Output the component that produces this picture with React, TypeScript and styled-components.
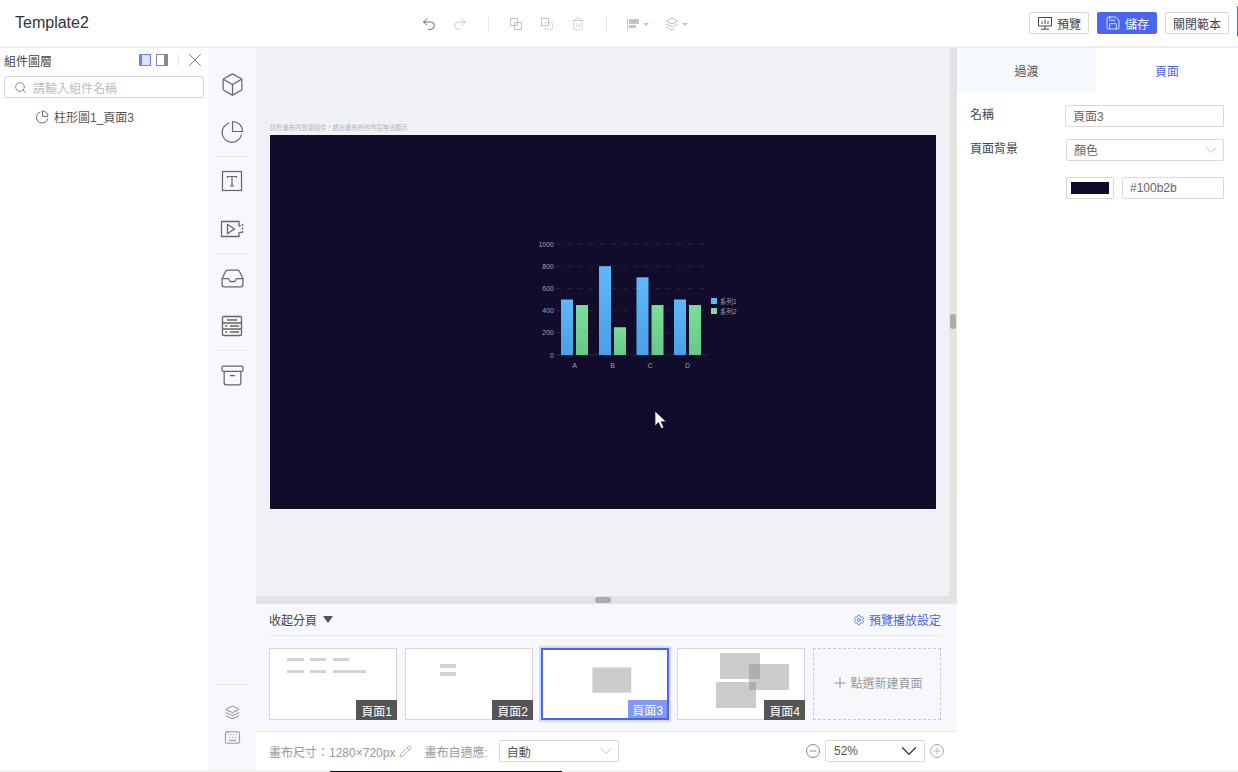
import React from 'react';
import styled, { createGlobalStyle } from 'styled-components';
import { ChevronDown, Pencil, Search, X, Settings, Plus, Minus, Undo2, Redo2, Trash2, Layers, Box, Inbox, Archive, Save, Keyboard } from 'lucide-react';

const GlobalStyle = createGlobalStyle`
	html, body {
		margin: 0;
		height: 100%;
		overflow: hidden;
		background: #fff;
		font-family: "Liberation Sans", "Noto Sans CJK TC", sans-serif;
		font-size: 12px;
		color: #555;
	}
	* { box-sizing: border-box; }
`;

// Chart data
const chartData = [
	{ name: 'A', a: 500, b: 450 },
	{ name: 'B', a: 800, b: 250 },
	{ name: 'C', a: 700, b: 450 },
	{ name: 'D', a: 500, b: 450 },
];
const ticks = [0, 200, 400, 600, 800, 1000];

const pages = [
	{ label: '頁面1', blocks: 'lines' },
	{ label: '頁面2', blocks: 'bars' },
	{ label: '頁面3', blocks: 'single', active: true },
	{ label: '頁面4', blocks: 'stack' },
];

const Chart = () => {
	const y = (v: number) => 131 - v * 0.111;
	return (
		<ChartSvg width="240" height="155" viewBox="0 0 240 155">
			<defs>
				<linearGradient id="blueBar" x1="0" y1="0" x2="0" y2="1">
					<stop offset="0" stopColor="#5fb8fb" />
					<stop offset="1" stopColor="#4a9fe6" />
				</linearGradient>
				<linearGradient id="greenBar" x1="0" y1="0" x2="0" y2="1">
					<stop offset="0" stopColor="#7adf98" />
					<stop offset="1" stopColor="#67c98a" />
				</linearGradient>
			</defs>
			{ticks.map((t) => (
				<g key={t}>
					<line x1="31" x2="183" y1={y(t)} y2={y(t)} stroke="#26243d" strokeDasharray={t === 0 ? undefined : '5 6'} />
					<text x="29" y={y(t) + 2.5} textAnchor="end" fontSize="7" fill="#a09fa8">{t}</text>
				</g>
			))}
			{chartData.map((d, i) => {
				const x = 36 + [0, 38, 75.5, 113][i];
				return (
					<g key={d.name}>
						<rect x={x} y={y(d.a)} width="12" height={d.a * 0.111} fill="url(#blueBar)" />
						<rect x={x + 15} y={y(d.b)} width="12" height={d.b * 0.111} fill="url(#greenBar)" />
						<text x={x + 13.5} y="144" textAnchor="middle" fontSize="7" fill="#a09fa8">{d.name}</text>
					</g>
				);
			})}
			<rect x="186" y="74" width="6" height="6" fill="#5fb8fb" />
			<text x="195" y="79.5" fontSize="6.5" fill="#a09fa8">系列1</text>
			<rect x="186" y="84" width="6" height="6" fill="#7adf98" />
			<text x="195" y="89.5" fontSize="6.5" fill="#a09fa8">系列2</text>
		</ChartSvg>
	);
};

const Thumb = ({ kind }: { kind: string }) => {
	if (kind === 'lines') {
		return (
			<ThumbArt viewBox="0 0 126 70">
				<g fill="#d2d2d2">
					<rect x="17" y="9" width="17" height="3" />
					<rect x="40" y="9" width="16" height="3" />
					<rect x="63" y="9" width="16" height="3" />
					<rect x="17" y="21" width="17" height="3" />
					<rect x="40" y="21" width="16" height="3" />
					<rect x="63" y="21" width="33" height="3" />
				</g>
			</ThumbArt>
		);
	}
	if (kind === 'bars') {
		return (
			<ThumbArt viewBox="0 0 126 70">
				<g fill="#d2d2d2">
					<rect x="34" y="15" width="16" height="4" />
					<rect x="34" y="23" width="16" height="4" />
				</g>
			</ThumbArt>
		);
	}
	if (kind === 'single') {
		return (
			<ThumbArt viewBox="0 0 126 70">
				<rect x="50" y="18" width="40" height="26" fill="#cccccc" />
			</ThumbArt>
		);
	}
	return (
		<ThumbArt viewBox="0 0 126 70">
			<g fill="#8c8c8c" fillOpacity="0.45">
				<rect x="42" y="4" width="40" height="26" />
				<rect x="71" y="15" width="40" height="26" />
				<rect x="38" y="33" width="40" height="26" />
			</g>
		</ThumbArt>
	);
};

/**
 * Template editor screen
 */
const App: React.FC = () => (
	<Root>
		<GlobalStyle />
		<Header>
			<Title>Template2</Title>
			<Tools>
				<ToolIcon><Undo2 size={16} strokeWidth={1.3} /></ToolIcon>
				<ToolIcon $off><Redo2 size={16} strokeWidth={1.3} /></ToolIcon>
				<ToolSep />
				<ToolIcon $off>
					<svg width="14" height="14" viewBox="0 0 14 14" fill="none" stroke="currentColor">
						<rect x="1.5" y="1.5" width="7" height="7" />
						<rect x="5.5" y="5.5" width="7" height="7" />
					</svg>
				</ToolIcon>
				<ToolIcon $off>
					<svg width="14" height="14" viewBox="0 0 14 14" fill="none" stroke="currentColor">
						<rect x="1.5" y="1.5" width="7" height="7" />
						<rect x="5.5" y="5.5" width="7" height="7" strokeDasharray="1.5 1.5" />
					</svg>
				</ToolIcon>
				<ToolIcon $off><Trash2 size={14} strokeWidth={1.3} /></ToolIcon>
				<ToolSep />
				<ToolIcon $off $width={40}>
					<svg width="24" height="14" viewBox="0 0 24 14">
						<path d="M1.5 1v12" stroke="currentColor" fill="none" />
						<path d="M3 2h10v5H3zM3 8h7v3H3z" fill="currentColor" />
						<path d="M17 6h6l-3 3z" fill="currentColor" />
					</svg>
				</ToolIcon>
				<ToolIcon $off $width={37}>
					<svg width="24" height="14" viewBox="0 0 24 14" fill="none" stroke="currentColor">
						<path d="M7 1l6 3-6 3-6-3zM1 7l6 3 6-3M1 10l6 3 3-1.5" />
						<path d="M17 6h6l-3 3z" fill="currentColor" stroke="none" />
					</svg>
				</ToolIcon>
			</Tools>
			<Actions>
				<HeaderButton>
					<svg width="16" height="14" viewBox="0 0 16 14" fill="none" stroke="currentColor" strokeWidth="1">
						<path d="M1.5 1.5h13v8.5h-13zM8 10v3M4 13.2h8" />
						<path d="M5 8V5.5M8 8V3.5M11 8V5" />
					</svg>
					預覽
				</HeaderButton>
				<HeaderButton $primary><Save size={16} strokeWidth={1.2} />儲存</HeaderButton>
				<HeaderButton>關閉範本</HeaderButton>
			</Actions>
			<EdgeMark />
		</Header>
		<Body>
			<LayerPanel>
				<LayerHead>
					<span>組件圖層</span>
					<LayerTools>
						<PanelToggle $active />
						<PanelToggle $flip />
						<VSep />
						<X size={22} strokeWidth={0.9} color="#666" />
					</LayerTools>
				</LayerHead>
				<SearchBox>
					<Search size={13} color="#777" strokeWidth={1.5} />
					<span>請輸入組件名稱</span>
				</SearchBox>
				<LayerItem>
					<svg width="14" height="14" viewBox="0 0 14 14" fill="none" stroke="#666">
						<path d="M5.7 1.9A5.6 5.6 0 1 0 12.6 8.6" />
						<path d="M7.5 1a5.2 5.2 0 0 1 5.4 5.4H7.5z" />
					</svg>
					柱形圖1_頁面3
				</LayerItem>
			</LayerPanel>
			<Rail>
				<RailGroup>
					<RailIcon><Box size={25} strokeWidth={1.2} /></RailIcon>
					<RailIcon>
						<svg width="24" height="24" viewBox="0 0 24 24" fill="none" stroke="currentColor" strokeWidth="1.2">
							<path d="M9.5 3A9.8 9.8 0 1 0 21.5 14.5" />
							<path d="M12.5 1.5a9.8 9.8 0 0 1 10 10h-10z" />
						</svg>
					</RailIcon>
				</RailGroup>
				<RailGroup>
					<RailIcon>
						<svg width="24" height="24" viewBox="0 0 24 24" fill="none" stroke="currentColor" strokeWidth="1.2">
							<rect x="2.5" y="2.5" width="19" height="19" />
							<path d="M7.5 9V7.5h9V9M12 7.5v9.5M10 17h4" />
						</svg>
					</RailIcon>
					<RailIcon>
						<svg width="24" height="24" viewBox="0 0 24 24" fill="none" stroke="currentColor" strokeWidth="1.3">
							<path d="M19 9V4.5H1.5v15H19V15" />
							<path d="M7.5 7.5l7 4.5-7 4.5z" />
							<path d="M19 9.5l3.5-2v9l-3.5-2" strokeDasharray="2 1.5" />
						</svg>
					</RailIcon>
				</RailGroup>
				<RailGroup>
					<RailIcon><Inbox size={25} strokeWidth={1.2} /></RailIcon>
					<RailIcon>
						<svg width="24" height="24" viewBox="0 0 24 24" fill="none" stroke="currentColor" strokeWidth="1.3">
							<rect x="2.5" y="2.5" width="19" height="19" rx="1" />
							<path d="M2.5 9h19M2.5 15h19M7 6h10M5 12h2M10 12h9M5 18h2M10 18h9" />
						</svg>
					</RailIcon>
				</RailGroup>
				<RailGroup>
					<RailIcon><Archive size={25} strokeWidth={1.2} /></RailIcon>
				</RailGroup>
				<RailFooter>
					<Layers size={15} strokeWidth={1.2} />
					<Keyboard size={17} strokeWidth={1} />
				</RailFooter>
			</Rail>
			<Center>
				<Workspace>
					<CanvasArea>
						<Hint>請在畫布內放置組件，超出畫布外的內容無法顯示</Hint>
						<Canvas>
							<Chart />
							<Cursor width="14" height="20" viewBox="0 0 14 20">
								<path d="M1 1v15l3.6-3.4 2.6 6 2.6-1.1-2.6-5.8h5z" fill="#fff" stroke="#222" strokeWidth="0.8" />
							</Cursor>
						</Canvas>
					</CanvasArea>
					<VScroll><VThumb /></VScroll>
				</Workspace>
				<HScroll><HThumb /></HScroll>
				<PagePanel>
					<PageHead>
						<Collapse>收起分頁<Caret /></Collapse>
						<Setting><Settings size={12} strokeWidth={1.5} />預覽播放設定</Setting>
					</PageHead>
					<PageRow>
						{pages.map((p) => (
							<PageCard key={p.label} $active={p.active}>
								<Thumb kind={p.blocks} />
								<PageTag $active={p.active}>{p.label}</PageTag>
							</PageCard>
						))}
						<AddPage><Plus size={18} strokeWidth={1} color="#777" />點選新建頁面</AddPage>
					</PageRow>
				</PagePanel>
				<Footer>
					<FooterText>畫布尺寸：1280×720px</FooterText>
					<Pencil size={13} strokeWidth={1} color="#777" />
					<FooterLabel>畫布自適應:</FooterLabel>
					<SelectBox $width={120}>自動<ChevronDown size={20} strokeWidth={0.9} color="#aaa" /></SelectBox>
					<Zoomer>
						<ZoomBtn><Minus size={10} /></ZoomBtn>
						<ZoomSelect>52%<ChevronDown size={26} strokeWidth={1.1} color="#333" /></ZoomSelect>
						<ZoomBtn $light><Plus size={10} /></ZoomBtn>
					</Zoomer>
				</Footer>
			</Center>
			<Props>
				<Tabs>
					<Tab>過渡</Tab>
					<Tab $active>頁面</Tab>
				</Tabs>
				<PropForm>
					<PropRow>
						<PropLabel>名稱</PropLabel>
						<PropInput>頁面3</PropInput>
					</PropRow>
					<PropRow>
						<PropLabel>頁面背景</PropLabel>
						<PropSelect>顏色<ChevronDown size={20} strokeWidth={0.9} color="#aaa" /></PropSelect>
					</PropRow>
					<ColorRow>
						<Swatch><SwatchFill /></Swatch>
						<HexInput>#100b2b</HexInput>
					</ColorRow>
				</PropForm>
			</Props>
		</Body>
		<PageEdge><EdgeStroke /></PageEdge>
	</Root>
);
App.displayName = 'App';
export default App;

// Styles
const Root = styled.div`
	width: 1238px;
	height: 772px;
	display: flex;
	flex-direction: column;
	background: #fff;
`;

const Header = styled.header`
	height: 48px;
	flex: none;
	display: flex;
	align-items: center;
	position: relative;
	padding: 0 9px 0 15px;
	border-bottom: 2px solid #eceef2;
`;

const Title = styled.div`
	width: 398px;
	font-size: 16px;
	color: #333;
`;

const Tools = styled.div`
	display: flex;
	align-items: center;
	color: #555;
	margin-top: 2px;
`;

const ToolIcon = styled.span<{ $off?: boolean; $width?: number }>`
	width: ${(p) => p.$width ?? 31}px;
	height: 16px;
	display: flex;
	align-items: center;
	justify-content: center;
	color: ${(p) => (p.$off ? '#c4c4c4' : '#555')};
`;

const ToolSep = styled.i`
	width: 1px;
	height: 16px;
	margin: 0 11px 0 13px;
	background: #e8e8e8;
`;

const Actions = styled.div`
	margin-left: auto;
	display: flex;
	gap: 8px;
`;

const EdgeMark = styled.i`
	position: absolute;
	right: 0;
	top: 6px;
	width: 1px;
	height: 30px;
	background: #2a86b4;
`;

const HeaderButton = styled.button<{ $primary?: boolean }>`
	height: 22px;
	padding: 0 7px;
	display: flex;
	align-items: center;
	gap: 4px;
	font: inherit;
	border-radius: 2px;
	border: 1px solid ${(p) => (p.$primary ? '#4a66f0' : '#d9d9d9')};
	background: ${(p) => (p.$primary ? '#4a66f0' : '#fff')};
	color: ${(p) => (p.$primary ? '#fff' : '#444')};
`;

const Body = styled.div`
	flex: 1;
	min-height: 0;
	display: flex;
`;

const LayerPanel = styled.aside`
	width: 208px;
	flex: none;
	padding: 3px 4px 0;
`;

const LayerHead = styled.div`
	height: 18px;
	display: flex;
	align-items: center;
	justify-content: space-between;
	color: #444;
`;

const LayerTools = styled.div`
	display: flex;
	align-items: center;
	gap: 5px;
	margin-right: -2px;
`;

const PanelToggle = styled.i<{ $active?: boolean; $flip?: boolean }>`
	width: 12px;
	height: 12px;
	background: ${(p) => (p.$active ? '#dde3fb' : '#fff')};
	border: 1px solid ${(p) => (p.$active ? '#6a82ee' : '#888')};
	border-left-width: ${(p) => (p.$flip ? '1px' : '3px')};
	border-right-width: ${(p) => (p.$flip ? '4px' : '1px')};
`;

const VSep = styled.i`
	width: 1px;
	height: 12px;
	margin-left: 5px;
	background: #e8e8e8;
`;

const SearchBox = styled.div`
	height: 22px;
	margin-top: 7px;
	padding: 0 9px;
	display: flex;
	align-items: center;
	gap: 6px;
	color: #bdbdbd;
	border: 1px solid #d9d9d9;
	border-radius: 2px;
`;

const LayerItem = styled.div`
	margin: 10px 0 0 31px;
	display: flex;
	align-items: center;
	gap: 5px;
	color: #555;
`;

const Rail = styled.nav`
	width: 48px;
	flex: none;
	padding: 12px 0 0;
	display: flex;
	flex-direction: column;
	background: #f6f8fc;
`;

const RailGroup = styled.div`
	margin: 0 8px;
	display: flex;
	flex-direction: column;
	border-bottom: 1px solid #e6e8ec;
	&:nth-child(4) { border-bottom: 0; }
`;

const RailIcon = styled.span`
	height: 48px;
	display: flex;
	align-items: center;
	justify-content: center;
	color: #666;
`;

const RailFooter = styled.div`
	margin: auto 8px 0;
	height: 86px;
	padding-top: 20px;
	display: flex;
	flex-direction: column;
	align-items: center;
	gap: 9px;
	color: #666;
	border-top: 1px solid #e6e8ec;
`;

const Center = styled.main`
	flex: 1;
	min-width: 0;
	display: flex;
	flex-direction: column;
`;

const Workspace = styled.div`
	height: 548px;
	flex: none;
	display: flex;
`;

const CanvasArea = styled.div`
	flex: 1;
	padding: 76px 13px 0 14px;
	background: #eff1f4;
`;

const Hint = styled.div`
	height: 11px;
	font-size: 6.25px;
	line-height: 8px;
	color: #b4b6bb;
`;

const Canvas = styled.div`
	width: 666px;
	height: 374px;
	position: relative;
	background: #110c2c;
`;

const ChartSvg = styled.svg`
	position: absolute;
	left: 255px;
	top: 89px;
`;

const Cursor = styled.svg`
	position: absolute;
	left: 384px;
	top: 275px;
`;

const VScroll = styled.div`
	width: 8px;
	padding-top: 266px;
	background: #e2e3e4;
`;

const VThumb = styled.div`
	width: 6px;
	height: 15px;
	margin-left: 1px;
	border-radius: 3px;
	background: #a9abad;
`;

const HScroll = styled.div`
	height: 8px;
	flex: none;
	padding: 1px 0 0 339px;
	background: #e2e3e4;
`;

const HThumb = styled.div`
	width: 16px;
	height: 6px;
	border-radius: 3px;
	background: #a9abad;
`;

const PagePanel = styled.section`
	height: 127px;
	flex: none;
	padding: 0 16px 0 13px;
	background: #f6f8fc;
`;

const PageHead = styled.div`
	height: 32px;
	display: flex;
	align-items: center;
	justify-content: space-between;
	border-bottom: 1px solid #e9e9ee;
`;

const Collapse = styled.div`
	display: flex;
	align-items: center;
	gap: 6px;
	color: #444;
`;

const Caret = styled.i`
	border-left: 5.5px solid transparent;
	border-right: 5.5px solid transparent;
	border-top: 7px solid #555;
`;

const Setting = styled.div`
	display: flex;
	align-items: center;
	gap: 4px;
	color: #4a66d8;
`;

const PageRow = styled.div`
	margin-top: 12px;
	display: flex;
	gap: 8px;
`;

const PageCard = styled.div<{ $active?: boolean }>`
	width: 128px;
	height: 72px;
	position: relative;
	background: #fff;
	border: ${(p) => (p.$active ? '2px solid #4a66f0' : '1px solid #d4d7dd')};
	box-shadow: ${(p) => (p.$active ? '0 0 0 2px #d5dcfb' : 'none')};
`;

const ThumbArt = styled.svg`
	display: block;
	width: 100%;
	height: 100%;
`;

const PageTag = styled.span<{ $active?: boolean }>`
	position: absolute;
	right: ${(p) => (p.$active ? '0' : '-1px')};
	bottom: ${(p) => (p.$active ? '0' : '-1px')};
	width: ${(p) => (p.$active ? '39px' : '41px')};
	height: ${(p) => (p.$active ? '18px' : '20px')};
	display: flex;
	align-items: center;
	justify-content: center;
	color: #fff;
	background: ${(p) => (p.$active ? '#8498f5' : '#555')};
`;

const AddPage = styled.div`
	width: 128px;
	height: 72px;
	padding-bottom: 3px;
	display: flex;
	align-items: center;
	justify-content: center;
	gap: 1px;
	color: #999;
	border: 1px dashed #c9ccd6;
`;

const Footer = styled.footer`
	height: 39px;
	flex: none;
	padding: 0 13px;
	display: flex;
	align-items: center;
	color: #999;
	border-top: 1px solid #e9e9ee;
`;

const FooterText = styled.span`
	margin-right: 4px;
`;

const FooterLabel = styled.span`
	margin: 0 11px 0 12px;
`;

const SelectBox = styled.div<{ $width: number }>`
	width: ${(p) => p.$width}px;
	height: 22px;
	padding: 0 2px 0 7px;
	display: flex;
	align-items: center;
	justify-content: space-between;
	color: #555;
	border: 1px solid #d9d9d9;
	border-radius: 2px;
`;

const Zoomer = styled.div`
	margin-left: auto;
	display: flex;
	align-items: center;
	gap: 5px;
`;

const ZoomBtn = styled.span<{ $light?: boolean }>`
	width: 14px;
	height: 14px;
	display: flex;
	align-items: center;
	justify-content: center;
	border-radius: 50%;
	color: ${(p) => (p.$light ? '#aaa' : '#777')};
	border: 1px solid ${(p) => (p.$light ? '#aaa' : '#888')};
`;

const ZoomSelect = styled.div`
	width: 100px;
	height: 22px;
	padding: 0 2px 0 8px;
	display: flex;
	align-items: center;
	justify-content: space-between;
	color: #555;
	border: 1px solid #d9d9d9;
	border-radius: 2px;
`;

const Props = styled.aside`
	width: 281px;
	flex: none;
	background: #fff;
`;

const Tabs = styled.div`
	height: 46px;
	padding-bottom: 2px;
	display: grid;
	grid-template-columns: 139px 1fr;
`;

const Tab = styled.div<{ $active?: boolean }>`
	display: flex;
	align-items: center;
	justify-content: center;
	color: ${(p) => (p.$active ? '#4a66d8' : '#555')};
	background: ${(p) => (p.$active ? '#fff' : '#f6f9fd')};
`;

const PropForm = styled.div`
	padding: 0 14px 0 13px;
`;

const PropRow = styled.div`
	margin-top: 12px;
	display: flex;
	align-items: flex-start;
	color: #444;
	&:first-child { margin-top: 11px; }
`;

const PropLabel = styled.div`
	width: 95px;
	line-height: 21px;
`;

const PropInput = styled.div`
	flex: 1;
	height: 22px;
	padding: 0 7px 1px;
	display: flex;
	align-items: center;
	color: #666;
	border: 1px solid #d9d9d9;
	border-radius: 2px;
`;

const PropSelect = styled(PropInput)`
	margin-left: 1px;
	padding-right: 2px;
	justify-content: space-between;
`;

const ColorRow = styled.div`
	margin: 16px 0 0 96px;
	display: flex;
	gap: 8px;
`;

const Swatch = styled.div`
	width: 48px;
	height: 22px;
	padding: 4px;
	border: 1px solid #d9d9d9;
	border-radius: 2px;
`;

const SwatchFill = styled.div`
	height: 100%;
	background: #100b2b;
`;

const HexInput = styled(PropInput)``;

const PageEdge = styled.div`
	height: 2px;
	flex: none;
	padding-top: 1px;
	background: #f0f1f3;
`;

const EdgeStroke = styled.div`
	width: 232px;
	height: 1px;
	margin-left: 330px;
	background: #111;
`;
